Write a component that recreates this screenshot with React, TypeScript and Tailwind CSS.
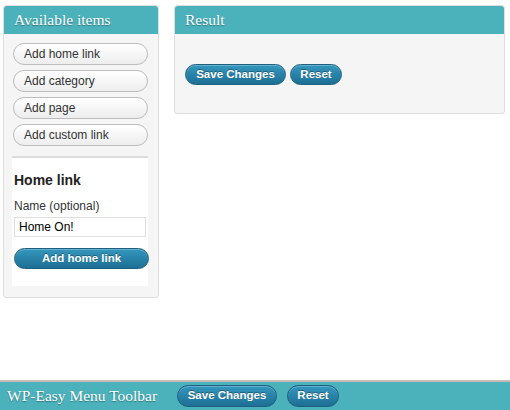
const blueBtn =
  "rounded-full border border-[#1c5f7f] bg-gradient-to-b from-[#3497be] to-[#1d6f94] text-white font-bold text-[11.5px] leading-none shadow-[inset_0_1px_0_rgba(255,255,255,0.25)] [text-shadow:0_-1px_0_rgba(0,0,0,0.35)]";

const grayBtn =
  "h-[22px] w-[135px] rounded-full border border-[#bdbdbd] bg-gradient-to-b from-white to-[#ededed] text-left pl-[10px] text-[12px] text-[#333]";

function PanelHeader({ title }: { title: string }) {
  return (
    <div className="h-[28px] bg-[#4bb1ba] rounded-t-[3px] flex items-center pl-[10px]">
      <span className="font-['Liberation_Serif',serif] text-[15.5px] text-white [text-shadow:0_1px_1px_rgba(0,0,0,0.35)]">
        {title}
      </span>
    </div>
  );
}

export default function App() {
  const items = ["Add home link", "Add category", "Add page", "Add custom link"];

  return (
    <div className="min-h-screen flex flex-col bg-white font-['Liberation_Sans',Arial,sans-serif]">
      <div className="flex items-start gap-[15px] pl-[3px] pt-[5px]">
        {/* Available items */}
        <div className="w-[156px] bg-[#f5f5f5] border border-[#dedede] rounded-[3px]">
          <PanelHeader title="Available items" />
          <div className="flex flex-col gap-[5px] pt-[9px] pl-[9px]">
            {items.map((item) => (
              <button key={item} className={grayBtn}>
                {item}
              </button>
            ))}
          </div>
          <div className="mt-[10px] ml-[8px] w-[136px] bg-white border-t-2 border-[#dcdcdc] pt-[12px] pb-[17px] pl-[2px]">
            <h3 className="text-[14px] font-bold text-[#222]">Home link</h3>
            <p className="text-[12px] text-[#333] mt-[6px]">Name (optional)</p>
            <div className="mt-[2px] w-[132px] h-[20px] border border-[#dfdfdf] bg-white flex items-center pl-[4px] text-[12px] text-black">
              Home On!
            </div>
            <button className={`${blueBtn} mt-[11px] w-[135px] h-[21px]`}>Add home link</button>
          </div>
          <div className="h-[11px]" />
        </div>

        {/* Result */}
        <div className="w-[331px] bg-[#f5f5f5] border border-[#dedede] rounded-[3px]">
          <PanelHeader title="Result" />
          <div className="flex gap-[4px] pl-[10px] pt-[30px] pb-[28px]">
            <button className={`${blueBtn} w-[101px] h-[21px]`}>Save Changes</button>
            <button className={`${blueBtn} w-[52px] h-[21px]`}>Reset</button>
          </div>
        </div>
      </div>

      {/* Toolbar */}
      <div className="mt-auto h-[30px] bg-[#4bb1ba] border-t-2 border-[#c9b9bb] flex items-center pl-[7px]">
        <span className="w-[151px] font-['Liberation_Serif',serif] text-[15.5px] text-white whitespace-nowrap [text-shadow:0_1px_1px_rgba(0,0,0,0.35)]">
          WP-Easy Menu Toolbar
        </span>
        <button className={`${blueBtn} ml-[19px] w-[100px] h-[22px]`}>Save Changes</button>
        <button className={`${blueBtn} ml-[10px] w-[52px] h-[22px]`}>Reset</button>
      </div>
    </div>
  );
}
